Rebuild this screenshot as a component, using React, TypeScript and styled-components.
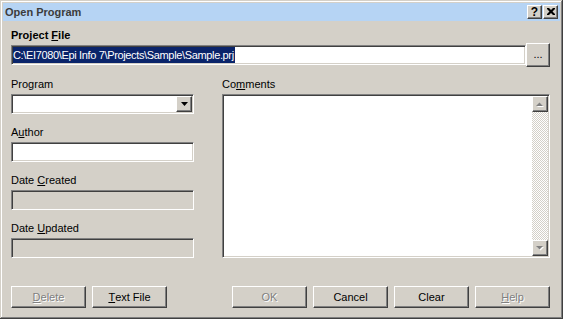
import React from 'react';
import styled, { createGlobalStyle } from 'styled-components';

const face = '#d4d0c8';

const GlobalStyle = createGlobalStyle`
  html, body {
    margin: 0;
    padding: 0;
    background: ${face};
  }
  body {
    font-family: 'Liberation Sans', Arial, sans-serif;
    font-size: 11px;
    color: #000;
  }
`;

export default function App() {
  return (
    <>
      <GlobalStyle />
      <Window>
        <TitleBar>
          <TitleText>Open Program</TitleText>
          <CaptionButtons>
            <CaptionButton>?</CaptionButton>
            <CaptionButton>
              <svg width='8' height='7' viewBox='0 0 8 7'>
                <path d='M0 0h2l2 2 2-2h2v1L5.5 3.5 8 6v1H6L4 5 2 7H0V6l2.5-2.5L0 1z' fill='#000' />
              </svg>
            </CaptionButton>
          </CaptionButtons>
        </TitleBar>

        <Body>
          <SectionLabel>
            Project <u>F</u>ile
          </SectionLabel>
          <PathRow>
            <PathInput>
              <Selection>C:\EI7080\Epi Info 7\Projects\Sample\Sample.prj</Selection>
            </PathInput>
            <BrowseButton>...</BrowseButton>
          </PathRow>

          <Columns>
            <LeftColumn>
              <FieldGroup>
                <Label>Program</Label>
                <ComboBox>
                  <DropButton>
                    <svg width='7' height='4' viewBox='0 0 7 4'>
                      <polygon points='0,0 7,0 3.5,4' fill='#000' />
                    </svg>
                  </DropButton>
                </ComboBox>
              </FieldGroup>
              <FieldGroup>
                <Label>
                  A<u>u</u>thor
                </Label>
                <TextBox />
              </FieldGroup>
              <FieldGroup>
                <Label>
                  Date <u>C</u>reated
                </Label>
                <TextBox $disabled />
              </FieldGroup>
              <FieldGroup>
                <Label>
                  Date <u>U</u>pdated
                </Label>
                <TextBox $disabled />
              </FieldGroup>
            </LeftColumn>

            <RightColumn>
              <Label>
                Co<u>m</u>ments
              </Label>
              <Memo>
                <ScrollBar>
                  <ScrollArrow>
                    <svg width='8' height='5' viewBox='0 0 8 5'>
                      <polygon points='1,5 8,5 4.5,1.5' fill='#fff' />
                      <polygon points='0,4 7,4 3.5,0.5' fill='#808080' />
                    </svg>
                  </ScrollArrow>
                  <ScrollTrack />
                  <ScrollArrow>
                    <svg width='8' height='5' viewBox='0 0 8 5'>
                      <polygon points='1,1 8,1 4.5,4.5' fill='#fff' />
                      <polygon points='0,0 7,0 3.5,3.5' fill='#808080' />
                    </svg>
                  </ScrollArrow>
                </ScrollBar>
              </Memo>
            </RightColumn>
          </Columns>

          <ButtonBar>
            <ButtonGroup>
              <PushButton $disabled>
                <u>D</u>elete
              </PushButton>
              <PushButton>
                <u>T</u>ext File
              </PushButton>
            </ButtonGroup>
            <ButtonGroup>
              <PushButton $disabled>OK</PushButton>
              <PushButton>Cancel</PushButton>
              <PushButton>Clear</PushButton>
              <PushButton $disabled>
                <u>H</u>elp
              </PushButton>
            </ButtonGroup>
          </ButtonBar>
        </Body>
      </Window>
    </>
  );
}

const Window = styled.div`
  width: 563px;
  height: 319px;
  box-sizing: border-box;
  padding: 3px;
  background: ${face};
  box-shadow: inset -1px -1px #404040, inset 1px 1px ${face}, inset -2px -2px #808080,
    inset 2px 2px #fff;
  display: flex;
  flex-direction: column;
`;

const TitleBar = styled.div`
  height: 18px;
  flex-shrink: 0;
  background: #b6d4f4;
  display: flex;
  align-items: center;
  justify-content: space-between;
  padding: 0 2px 0 2px;
`;

const TitleText = styled.div`
  font-weight: bold;
  font-size: 11px;
  color: #3c3c3c;
  line-height: 18px;
`;

const CaptionButtons = styled.div`
  display: flex;
  gap: 1px;
`;

const CaptionButton = styled.div`
  width: 15px;
  height: 14px;
  box-sizing: border-box;
  background: ${face};
  border: 1px solid;
  border-color: #fff #404040 #404040 #fff;
  box-shadow: inset -1px -1px #808080;
  display: flex;
  align-items: center;
  justify-content: center;
  font-weight: bold;
  font-size: 12px;
  line-height: 12px;
  padding-bottom: 1px;
`;

const Body = styled.div`
  flex: 1;
  display: flex;
  flex-direction: column;
  padding: 6px 10px 0 8px;
`;

const SectionLabel = styled.div`
  font-weight: bold;
  height: 13px;
  line-height: 16px;
`;

const PathRow = styled.div`
  display: flex;
  align-items: center;
  height: 24px;
  margin-top: 3px;
`;

const Sunken = styled.div`
  box-sizing: border-box;
  border: 1px solid;
  border-color: #808080 #fff #fff #808080;
  box-shadow: inset 1px 1px #404040, inset -1px -1px ${face};
  padding: 1px;
`;

const PathInput = styled(Sunken)`
  flex: 1;
  height: 20px;
  background: #fff;
  display: flex;
  align-items: center;
`;

const Selection = styled.span`
  background: #0a246a;
  color: #fff;
  height: 16px;
  line-height: 16px;
  padding-right: 1px;
  letter-spacing: -0.35px;
  white-space: nowrap;
`;

const Raised = styled.div`
  box-sizing: border-box;
  background: ${face};
  border: 1px solid;
  border-color: #fff #404040 #404040 #fff;
  box-shadow: inset -1px -1px #808080;
  display: flex;
  align-items: center;
  justify-content: center;
`;

const BrowseButton = styled(Raised)`
  width: 24px;
  height: 24px;
  line-height: 11px;
  padding-bottom: 2px;
`;

const Columns = styled.div`
  display: flex;
  gap: 28px;
  margin-top: 10px;
`;

const LeftColumn = styled.div`
  width: 183px;
  display: flex;
  flex-direction: column;
  gap: 11px;
`;

const FieldGroup = styled.div`
  display: flex;
  flex-direction: column;
  gap: 4px;
`;

const Label = styled.div`
  height: 13px;
  line-height: 15px;
  white-space: nowrap;
`;

const TextBox = styled(Sunken)<{ $disabled?: boolean }>`
  height: 20px;
  background: ${(p) => (p.$disabled ? face : '#fff')};
`;

const ComboBox = styled(Sunken)`
  height: 20px;
  background: #fff;
  display: flex;
  justify-content: flex-end;
`;

const DropButton = styled(Raised)`
  width: 16px;
  height: 16px;
`;

const RightColumn = styled.div`
  flex: 1;
  display: flex;
  flex-direction: column;
  gap: 4px;
`;

const Memo = styled(Sunken)`
  height: 164px;
  background: #fff;
  display: flex;
  justify-content: flex-end;
`;

const ScrollBar = styled.div`
  width: 16px;
  display: flex;
  flex-direction: column;
`;

const ScrollArrow = styled(Raised)`
  width: 16px;
  height: 16px;
  flex-shrink: 0;
`;

const ScrollTrack = styled.div`
  flex: 1;
  background: repeating-conic-gradient(#fff 0 25%, ${face} 0 50%) 0 0 / 2px 2px;
`;

const ButtonBar = styled.div`
  display: flex;
  justify-content: space-between;
  margin-top: 28px;
`;

const ButtonGroup = styled.div`
  display: flex;
  gap: 6px;
`;

const PushButton = styled(Raised)<{ $disabled?: boolean }>`
  width: 75px;
  height: 22px;
  color: ${(p) => (p.$disabled ? '#808080' : '#000')};
  text-shadow: ${(p) => (p.$disabled ? '1px 1px #fff' : 'none')};
`;
